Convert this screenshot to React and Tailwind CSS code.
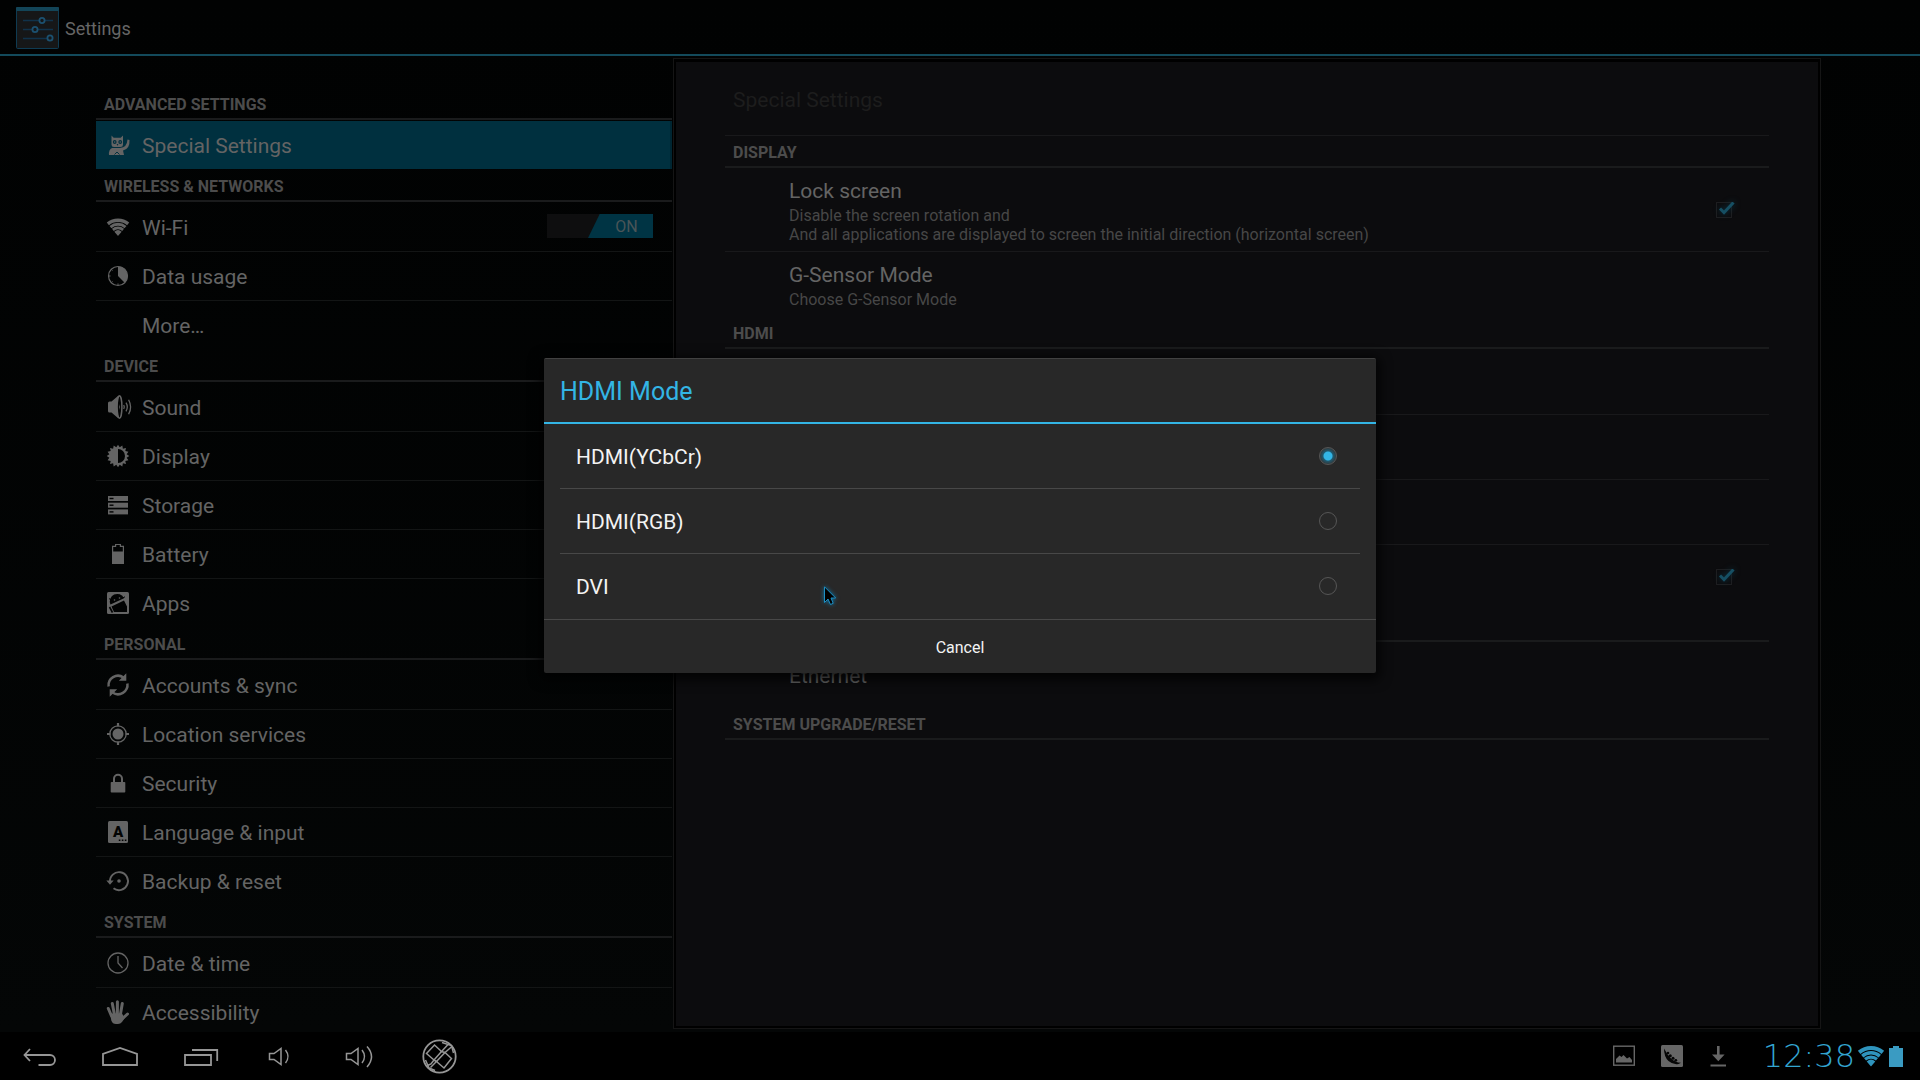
import React, { useState } from "react";

const ICON = "#646464";
const DARK = "#020303";

function Svg({ size = 32, children, className = "", ...rest }) {
  return (
    <svg
      width={size}
      height={size}
      viewBox="0 0 32 32"
      fill={ICON}
      aria-hidden="true"
      className={`shrink-0 ${className}`}
      {...rest}
    >
      {children}
    </svg>
  );
}

const line = { fill: "none", stroke: ICON };

/* Fan of concentric bands around an apex at (cx, cy). */
function fan(cx, cy, r, deg) {
  const a = (deg * Math.PI) / 180;
  const dx = r * Math.sin(a);
  const dy = r * Math.cos(a);
  return `M${cx - dx} ${cy - dy}A${r} ${r} 0 0 1 ${cx + dx} ${cy - dy}`;
}

function WifiFan({ color }) {
  return (
    <g fill="none" stroke={color}>
      <path d={fan(16, 25, 15.8, 40)} strokeWidth="3.4" />
      <path d={fan(16, 25, 11.7, 40)} strokeWidth="3" />
      <path d={fan(16, 25, 8, 40)} strokeWidth="2.8" />
      <path d={fan(16, 25, 3, 40)} strokeWidth="5.4" />
    </g>
  );
}

const OwlIcon = () => (
  <Svg>
    <path d="M9.500 6.500l2.200 2.200h7l2.300-2.200v9.200q0 2.300-2.600 2.300h-6.400q-2.500 0-2.500-2.300z" />
    <circle cx="12.700" cy="13" r="1.900" fill="#00303f" />
    <circle cx="18.200" cy="13" r="1.900" fill="#00303f" />
    <circle cx="12.700" cy="13" r="0.700" />
    <circle cx="18.200" cy="13" r="0.700" />
    <path d="M14.700 15h1.600l-.8 2z" fill="#00303f" />
    <path d="M10 19h8q7-.5 7.500-8.500l2 .5q.5 9-6.500 10.500l1 4.500h-15q-.5-5.500 3-7z" />
    <path d="M12.500 25.500l2.500-2.500 2.500 2.500" fill="none" stroke="#00303f" />
  </Svg>
);

const WifiIcon = () => (
  <Svg>
    <WifiFan color={ICON} />
  </Svg>
);

const DataIcon = () => (
  <Svg>
    <circle cx="16" cy="16" r="9.500" {...line} strokeWidth="1.200" />
    <path d="M16 16V6.500a9.500 9.500 0 0 1 6.700 16.200z" />
    <path d="M6.500 16h2M16 25.500v-2M9.300 9.300l1.200 1.200M9.300 22.700l1.200-1.200" {...line} />
  </Svg>
);

const SoundIcon = () => (
  <Svg>
    <path d="M6 12q0-1.500 1.500-1.500H9.500L16.500 4.500V27.500L9.500 21.500H7.500Q6 21.500 6 20z" />
    <ellipse cx="17.500" cy="16" rx="2.400" ry="11.200" fill={DARK} stroke={ICON} strokeWidth="1.500" />
    <path d="M17 13q1.600 3 0 6z" />
    <path d="M21.700 14q1.200 2 0 4M24 11.700q2.600 4.300 0 8.600M26.600 8.700q4 7.300 0 14.600" {...line} strokeWidth="1.300" />
  </Svg>
);

const teeth = Array.from({ length: 32 }, (_, i) => {
  const r = i % 2 ? 8.8 : 11.3;
  const a = (i * Math.PI) / 16;
  return `${(16 + r * Math.sin(a)).toFixed(2)},${(16 - r * Math.cos(a)).toFixed(2)}`;
}).join(" ");

const DisplayIcon = () => (
  <Svg>
    <polygon points={teeth} />
    <path d="M16 9a7 7 0 0 1 0 14z" fill={DARK} />
  </Svg>
);

const StorageIcon = () => (
  <Svg>
    {[7, 13.7, 20.4].map((y) => (
      <g key={y}>
        <rect x="6" y={y} width="20" height="5" />
        <rect x="7.500" y={y + 1.8} width="4" height="1.400" fill={DARK} />
      </g>
    ))}
  </Svg>
);

const BatteryIcon = () => (
  <Svg>
    <path d="M10.600 25.500V8.300h3V6.500h4.800v1.800h3v17.200z" {...line} strokeWidth="1.200" />
    <path d="M10 13.500h12V26H10z" />
  </Svg>
);

const AppsIcon = () => (
  <Svg>
    <rect x="5" y="5" width="22" height="22" rx="1.500" />
    <path d="M8.500 17.500A7.200 7.200 0 0 1 22 11.200z" fill={DARK} />
    <path d="M15.500 10V7.500M9 13l-2-1.500M20.500 11l2.500-1.200" stroke={DARK} strokeWidth="1" />
    <circle cx="12.500" cy="13" r=".8" />
    <circle cx="17.500" cy="11" r=".8" />
    <path d="M9.500 19.500L22 13.500l3 6V25H12z" fill={DARK} />
    <path d="M7.500 20l3 5.500" stroke={DARK} strokeWidth="1.600" />
  </Svg>
);

const SyncIcon = () => (
  <Svg>
    <path d="M6.600 17.500A9.500 9.500 0 0 1 21.500 8.500" {...line} strokeWidth="2.500" />
    <path d="M25.400 14.500A9.500 9.500 0 0 1 10.500 23.500" {...line} strokeWidth="2.500" />
    <path d="M24.300 4.300v7.500H16.800zM7.700 27.700v-7.500h7.500z" />
  </Svg>
);

const LocationIcon = () => (
  <Svg>
    <circle cx="16" cy="16" r="5.500" />
    <circle cx="16" cy="16" r="8.200" {...line} strokeWidth="1.300" />
    <path d="M16 5v3.500M16 23.500V27M5 16h3.500M23.500 16H27" {...line} strokeWidth="2.200" />
  </Svg>
);

const LockIcon = () => (
  <Svg>
    <rect x="8.700" y="15" width="14.600" height="10.500" rx=".8" />
    <path d="M12 15.500V11.700a4 4 0 0 1 8 0v3.800" {...line} strokeWidth="2" />
  </Svg>
);

const LanguageIcon = () => (
  <Svg>
    <rect x="6" y="5" width="20" height="22" rx="1.500" />
    <text x="16" y="20.500" textAnchor="middle" fontFamily="Roboto, sans-serif" fontWeight="900" fontSize="15" fill={DARK}>
      A
    </text>
    <path d="M16.800 23.500h1.600v1.600h-1.600zM19.800 23.500h1.600v1.600h-1.600zM22.800 23.500h1.600v1.600h-1.600z" fill={DARK} />
  </Svg>
);

const BackupIcon = () => (
  <Svg>
    <path d="M8 17A9 9 0 1 1 11.500 23.300" {...line} strokeWidth="1.900" />
    <path d="M4.300 15.500h7.400L8 19.700z" />
    <circle cx="17" cy="16" r="1.800" />
  </Svg>
);

const ClockIcon = () => (
  <Svg>
    <circle cx="16" cy="16" r="10" {...line} strokeWidth="1.300" />
    <path d="M16 9v7l4.500 5" {...line} strokeWidth="1.300" />
  </Svg>
);

const HandIcon = () => (
  <Svg>
    <path
      d="M6.300 12.500L9.500 20M10.300 7.500L12.300 18M15.400 5.700V18M20.300 7.500L18.500 18M25.500 18L20.500 22.500"
      {...line}
      strokeWidth="3"
      strokeLinecap="round"
    />
    <path d="M8 17.500h12l1.500 2.500 2 1-3.500 5q-1.500 2-4 2h-2q-3.500 0-4.700-3.500z" />
  </Svg>
);

const SECTIONS = [
  { title: "ADVANCED SETTINGS", items: [["Special Settings", OwlIcon]] },
  { title: "WIRELESS & NETWORKS", items: [["Wi-Fi", WifiIcon], ["Data usage", DataIcon], ["More…", null]] },
  {
    title: "DEVICE",
    items: [["Sound", SoundIcon], ["Display", DisplayIcon], ["Storage", StorageIcon], ["Battery", BatteryIcon], ["Apps", AppsIcon]],
  },
  {
    title: "PERSONAL",
    items: [
      ["Accounts & sync", SyncIcon],
      ["Location services", LocationIcon],
      ["Security", LockIcon],
      ["Language & input", LanguageIcon],
      ["Backup & reset", BackupIcon],
    ],
  },
  { title: "SYSTEM", items: [["Date & time", ClockIcon], ["Accessibility", HandIcon]] },
];

function TopBar() {
  return (
    <header className="flex h-14 shrink-0 items-center border-b-2 border-[#134a5b] pt-0.5 pl-4">
      <svg width="43" height="42" viewBox="0 0 43 42" aria-hidden="true">
        <rect x="0.500" y="0.500" width="42" height="41" rx="1" fill="#161718" stroke="#0f3b52" />
        <rect x="0" y="0" width="43" height="4" rx="1" fill="#134558" />
        <path d="M7 13.500h30M7 22.500h30M7 31.500h30" stroke="#10324a" strokeWidth="1.600" />
        <g fill="#161718" stroke="#1c5170" strokeWidth="1.800">
          <circle cx="26" cy="13.500" r="2.600" />
          <circle cx="19" cy="22.500" r="2.600" />
          <circle cx="34" cy="31" r="2.600" />
        </g>
      </svg>
      <h1 className="ml-1.5 pt-0.5 text-[18px] leading-6 text-[#666666]">Settings</h1>
    </header>
  );
}

function SectionHeader({ children }) {
  return (
    <h2 className="mb-px flex h-8 items-center border-b-2 border-[#1a1b1c] pt-1 pl-2 text-base leading-5 font-bold text-[#4c4c4c]">
      {children}
    </h2>
  );
}

function WifiSwitch() {
  const [on, setOn] = useState(true);
  return (
    <button
      type="button"
      role="switch"
      aria-checked={on}
      aria-label="Wi-Fi"
      onClick={() => setOn(!on)}
      className="mr-[19px] mb-0.5 flex h-6 w-[106px] justify-end bg-[#0e0e0f]"
    >
      <span className="flex h-6 w-[65px] items-center justify-center bg-[#003444] pt-0.5 pl-3 text-base leading-6 text-[#4a5558] [clip-path:polygon(18%_0,100%_0,100%_100%,0_100%)]">
        ON
      </span>
    </button>
  );
}

function SideList() {
  return (
    <nav className="min-w-0 pt-8" aria-label="Settings sections">
      {SECTIONS.map((section) => (
        <section key={section.title}>
          <SectionHeader>{section.title}</SectionHeader>
          <ul>
            {section.items.map(([label, Icon]) => (
              <li
                key={label}
                className={
                  label === "Special Settings"
                    ? "mb-px flex items-center border-r-2 border-[#002632] bg-[#00303f]"
                    : "flex items-center border-b border-[#131515] last:border-transparent"
                }
              >
                <a href="#" className="flex h-12 flex-1 items-center gap-2 pl-1.5 text-[21px] leading-6 text-[#646464]">
                  {Icon ? <Icon /> : <span className="w-8" />}
                  <span className="pt-0.5">{label}</span>
                </a>
                {label === "Wi-Fi" && <WifiSwitch />}
              </li>
            ))}
          </ul>
        </section>
      ))}
    </nav>
  );
}

function Check({ label }) {
  return (
    <span className="relative mt-0.5 mr-[35px] size-[18px] shrink-0">
      <input
        type="checkbox"
        defaultChecked
        aria-label={label}
        className="peer block size-4 appearance-none border border-[#1e1e20]"
      />
      <svg
        viewBox="0 0 18 18"
        aria-hidden="true"
        className="pointer-events-none absolute top-0 left-0.5 hidden size-[18px] drop-shadow-[0_0_3px_#0c3646] peer-checked:block"
      >
        <path d="M2 6.500L6 10.500L15.500 0.500" fill="none" stroke="#164f63" strokeWidth="3" />
      </svg>
    </span>
  );
}

function Preference({ title, lines = [], check = false }) {
  return (
    <li className="flex min-h-[65px] items-center border-b border-[#19191b] pl-16 last:border-transparent">
      <div className="min-w-0 flex-1 pt-[9px] pb-[7px]">
        <p className="text-[21px] leading-[26px] text-[#646464]">{title}</p>
        {lines.length > 0 && (
          <div className="mt-0.5 text-base leading-[19px] text-[#474747]">
            {lines.map((text) => (
              <p key={text}>{text}</p>
            ))}
          </div>
        )}
      </div>
      {check && <Check label={title || "HDMI option"} />}
    </li>
  );
}

function DetailPanel() {
  return (
    <main className="col-span-2 min-w-0 pt-0.5 pr-[3px] pb-[3px] pl-px">
      <div className="h-full border border-[#151515] bg-black px-0.5 pt-[3px] pb-0.5">
        <div className="h-full bg-[#0c0c0e] px-[49px]">
          <h2 className="border-b border-[#19191b] pt-[25px] pb-[22px] pl-2 text-[21px] leading-[26px] text-[#1d1d1d]">
            Special Settings
          </h2>
          <SectionHeader>DISPLAY</SectionHeader>
          <ul>
            <Preference
              title="Lock screen"
              lines={[
                "Disable the screen rotation and",
                "And all applications are displayed to screen the initial direction (horizontal screen)",
              ]}
              check
            />
            <Preference title="G-Sensor Mode" lines={["Choose G-Sensor Mode"]} />
          </ul>
          <SectionHeader>HDMI</SectionHeader>
          <ul>
            <Preference title="" />
            <Preference title="" />
            <Preference title="" />
            <Preference title="" check />
          </ul>
          <SectionHeader>{"\u00a0"}</SectionHeader>
          <ul>
            <Preference title="Ethernet" />
          </ul>
          <SectionHeader>SYSTEM UPGRADE/RESET</SectionHeader>
        </div>
      </div>
    </main>
  );
}

function Dialog() {
  const [mode, setMode] = useState("HDMI(YCbCr)");
  return (
    <div className="absolute inset-0 flex items-center justify-center pb-px">
      <div
        role="dialog"
        aria-label="HDMI Mode"
        className="relative w-[832px] max-w-full rounded-xs border-t border-[#414141] bg-[#282828] shadow-[0_3px_12px_4px_rgba(0,0,0,0.75)]"
      >
        <h2 className="border-b-2 border-[#33b5e5] px-4 pt-[17px] pb-[15px] text-[25px] leading-[31px] text-[#33b5e5]">HDMI Mode</h2>
        <div className="mb-px px-4">
          {["HDMI(YCbCr)", "HDMI(RGB)", "DVI"].map((name) => (
            <label
              key={name}
              className="flex h-[65px] items-center justify-between border-b border-[#484848] pr-[23px] pl-4 text-[21px] leading-6 text-[#f3f3f3] last:h-16 last:border-0"
            >
              <span className="pt-0.5">{name}</span>
              <input
                type="radio"
                name="hdmi-mode"
                checked={mode === name}
                onChange={() => setMode(name)}
                className="size-[18px] appearance-none rounded-full border border-[#565656] checked:bg-[radial-gradient(circle,#33b5e5_0_4px,#1f5a70_5px,#303a3e_8px)]"
              />
            </label>
          ))}
        </div>
        <button type="button" className="block h-[54px] w-full border-t border-[#484848] pt-0.5 text-base leading-5 text-[#f3f3f3]">
          Cancel
        </button>
        <svg
          width="14"
          height="20"
          viewBox="0 0 14 20"
          aria-hidden="true"
          className="pointer-events-none absolute top-[227px] left-[280px] drop-shadow-[0_0_2px_#1276a8]"
        >
          <path d="M.5 .8V16.500L4 13L6.500 18.500L9.200 17.300L7 12H11.700z" fill="#000" stroke="#1c8fc4" />
        </svg>
      </div>
    </div>
  );
}

function NavButton({ label, children }) {
  return (
    <button type="button" aria-label={label} className="flex h-12 w-20 items-center justify-center">
      <svg width="40" height="40" viewBox="0 0 40 40" fill="none" stroke="#969696" strokeWidth="1.800" aria-hidden="true">
        {children}
      </svg>
    </button>
  );
}

function SystemBar() {
  return (
    <footer className="flex h-12 shrink-0 items-center bg-black">
      <NavButton label="Back">
        <path d="M10 13L4.500 19L10 25M4.500 19H30a5 5 0 0 1 0 10H18.500" />
      </NavButton>
      <NavButton label="Home">
        <path d="M3 29V18L20 12L37 18V29z" />
      </NavButton>
      <NavButton label="Recent apps">
        <path d="M5 19H31V29H5zM12 14H37.200V25" />
      </NavButton>
      <NavButton label="Volume down">
        <path d="M9.500 17.500H14L21 12.500V28.500L14 23.500H9.500z" strokeWidth="1.500" />
        <path d="M25.500 14q5 6.500 0 13" strokeWidth="1.400" />
      </NavButton>
      <NavButton label="Volume up">
        <path d="M6.500 17.500H11L18 12.500V28.500L11 23.500H6.500z" strokeWidth="1.500" />
        <path d="M22 14q5 6.500 0 13M27 10.500q9 10 0 20.500" strokeWidth="1.500" />
      </NavButton>
      <NavButton label="Rotate screen">
        <circle cx="19.500" cy="20.500" r="16.200" />
        <path d="M6.500 17.500L14.500 9L21.500 15.500L14 24zM25 16.500L31.500 22.500L24 32L16.500 25.500z" strokeWidth="1.500" />
        <path d="M14 24L11 28L7.500 29.500M14 24L16.500 25.500L10.500 31.500M25 16.500L21.500 15.500L28 8.500M25 16.500L32.500 10" strokeWidth="1.500" />
        <path d="M22 6.500L31.500 9.500L33.500 17M15 34.500L9 32L5.500 24" strokeWidth="1.500" />
      </NavButton>

      <div className="ml-auto flex items-center pr-[17px]">
        <div className="mr-[36px] flex items-center gap-[26px]">
          <svg width="22" height="22" viewBox="0 0 22 22" aria-hidden="true">
            <rect x="0.700" y="1.200" width="20.600" height="19" fill="none" stroke="#666" strokeWidth="1.400" />
            <path d="M3 17.500V14L6.500 10.500L8.500 12L10.500 10L14 13.500L16.500 12L19 15V17.500z" fill="#666" />
          </svg>
          <svg width="22" height="22" viewBox="0 0 22 22" aria-hidden="true">
            <rect width="22" height="22" rx="1.500" fill="#666" />
            <path d="M3 3.500Q3 12 7.500 16T17.500 19L20 17.800Q14 17.500 10 13.500T3 3.500z" fill="#050505" />
            <g fill="#050505">
              <circle cx="7" cy="8" r="1.300" />
              <circle cx="9.300" cy="10.800" r="1.500" />
              <circle cx="12" cy="13.200" r="1.500" />
              <circle cx="14.800" cy="15.300" r="1.400" />
            </g>
          </svg>
          <svg width="18" height="22" viewBox="2 0 18 22" aria-hidden="true">
            <path d="M10 1h2.600V9.500h5L11.300 16.200L5 9.500h5zM3.500 19.500h15.500v2H3.500z" fill="#666" />
          </svg>
        </div>
        <time className="mr-0.5 text-[32px] leading-8 font-extralight text-[#33a5d1] [font-family:'DejaVu_Sans',sans-serif]">12:38</time>
        <svg width="28" height="28" viewBox="4 4 24 24" aria-hidden="true">
          <WifiFan color="#2f94bd" />
        </svg>
        <svg width="14" height="21" viewBox="0 0 14 21" className="ml-1" aria-hidden="true">
          <path d="M4 0h6v2h4v19H0V2h4z" fill="#3a9bc2" />
        </svg>
      </div>
    </footer>
  );
}

export default function App() {
  return (
    <div className="flex h-screen flex-col overflow-hidden bg-black [font-family:Roboto,sans-serif]">
      <div className="relative flex min-h-0 flex-1 flex-col bg-linear-to-b from-[#010202] to-[#040606]">
        <TopBar />
        <div className="grid min-h-0 flex-1 grid-cols-3 grid-rows-1 overflow-hidden px-24">
          <SideList />
          <DetailPanel />
        </div>
        <Dialog />
      </div>
      <SystemBar />
    </div>
  );
}
